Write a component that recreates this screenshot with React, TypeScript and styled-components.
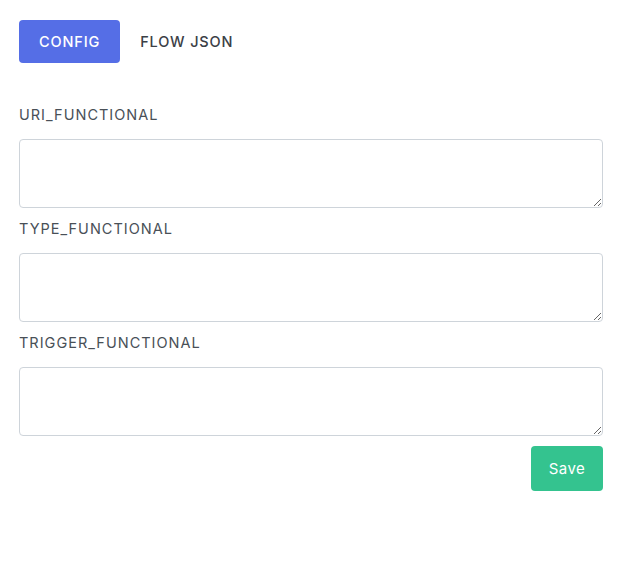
import React from "react";
import styled, { createGlobalStyle } from "styled-components";

const Global = createGlobalStyle`
  html, body { margin: 0; padding: 0; background: #ffffff; }
  body { font-family: Inter, "Open Sans", "Liberation Sans", sans-serif; color: #495057; }
  * { box-sizing: border-box; }
`;

const Page = styled.div`
  padding: 20px 19px;
  display: flex;
  flex-direction: column;
`;

const Tabs = styled.div`
  display: flex;
  align-items: center;
  margin-bottom: 43px;
`;

const Tab = styled.button<{ $active?: boolean }>`
  height: 43px;
  padding: 0 20px;
  border: none;
  border-radius: 4px;
  background: ${(p) => (p.$active ? "#556ee6" : "transparent")};
  color: ${(p) => (p.$active ? "#ffffff" : "#3b4046")};
  font-family: Inter, "Open Sans", "Liberation Sans", sans-serif;
  font-size: 14.5px;
  font-weight: 500;
  letter-spacing: 0.85px;
  cursor: pointer;
`;

const Field = styled.div`
  display: flex;
  flex-direction: column;
  margin-bottom: 12px;
`;

const Label = styled.label`
  font-size: 14.5px;
  font-weight: 400;
  color: #495057;
  line-height: 18px;
  letter-spacing: 1px;
  margin-bottom: 15px;
`;

const Area = styled.textarea`
  width: 100%;
  height: 69px;
  border: 1px solid #ced4da;
  border-radius: 4px;
  padding: 8px 12px;
  font-family: inherit;
  font-size: 13px;
  color: #495057;
  resize: vertical;
  outline: none;
`;

const Actions = styled.div`
  display: flex;
  justify-content: flex-end;
  margin-top: -2px;
`;

const SaveButton = styled.button`
  width: 72px;
  height: 45px;
  border: none;
  border-radius: 4px;
  background: #34c38f;
  color: #ffffff;
  font-family: Inter, "Open Sans", "Liberation Sans", sans-serif;
  font-size: 15px;
  font-weight: 400;
  letter-spacing: 0.5px;
  cursor: pointer;
`;

const fields = ["URI_FUNCTIONAL", "TYPE_FUNCTIONAL", "TRIGGER_FUNCTIONAL"];

export default function App() {
  return (
    <>
      <Global />
      <Page>
        <Tabs>
          <Tab $active>CONFIG</Tab>
          <Tab>FLOW JSON</Tab>
        </Tabs>
        {fields.map((f) => (
          <Field key={f}>
            <Label>{f}</Label>
            <Area />
          </Field>
        ))}
        <Actions>
          <SaveButton>Save</SaveButton>
        </Actions>
      </Page>
    </>
  );
}
